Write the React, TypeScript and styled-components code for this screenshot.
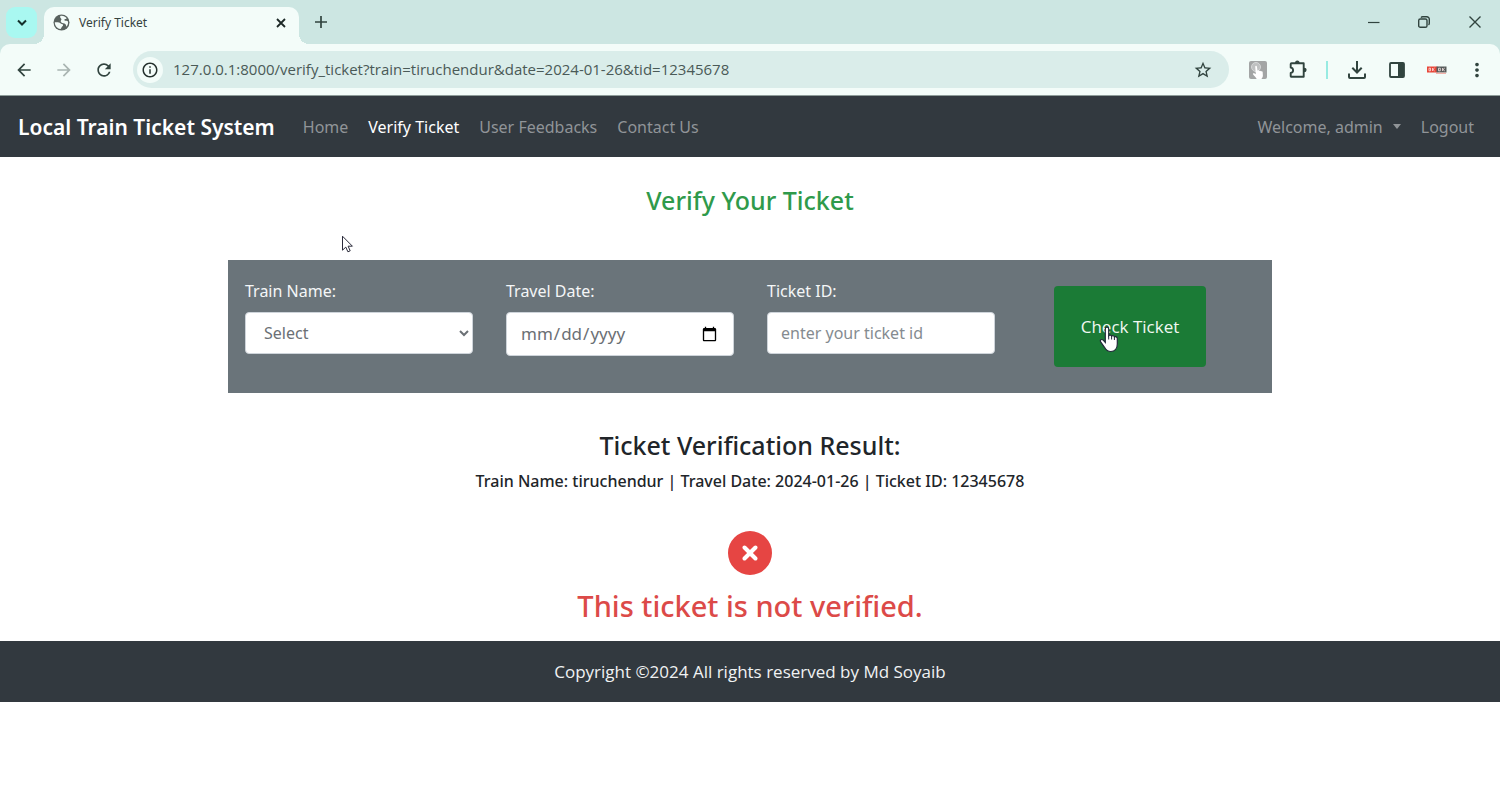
import React from 'react';
import styled, { createGlobalStyle } from 'styled-components';
import { FaCircleXmark } from 'react-icons/fa6';
import {
  MdArrowBack,
  MdArrowForward,
  MdInfoOutline,
  MdMoreVert,
  MdRefresh,
  MdStarBorder,
} from 'react-icons/md';

const ink = '#31443f';
const strip = '#cce6e2';
const surface = '#f3fcf9';
const dark = '#32393f';

const GlobalStyle = createGlobalStyle`
  *, *::before, *::after { box-sizing: border-box; }
  body {
    margin: 0;
    background: #fff;
    color: #212529;
    font: 400 16px/26px "Noto Sans", "Open Sans", sans-serif;
  }
  button, input, select { font: inherit; margin: 0; }
  button { border: 0; padding: 0; background: none; color: inherit; cursor: pointer; }
  h1, h2, h3, p { margin: 0; font-weight: 500; }
  svg { display: block; flex: none; }
`;

/* ---------- browser window ---------- */

const TabStrip = styled.div`
  display: flex;
  height: 44px;
  padding-left: 6px;
  background: ${strip};
  color: ${ink};
`;

const TabSearch = styled.button`
  display: grid;
  place-items: center;
  width: 31px;
  height: 31px;
  margin-top: 7px;
  border-radius: 9px;
  background: #a9f8f1;
  color: #14302b;
`;

const Tab = styled.div`
  position: relative;
  display: flex;
  align-items: center;
  width: 255px;
  height: 37px;
  margin: 7px 0 0 7px;
  padding: 0 10px 6px 9px;
  border-radius: 10px 10px 0 0;
  background: ${surface};
  font-size: 12px;
  line-height: 20px;

  &::before,
  &::after {
    content: '';
    position: absolute;
    bottom: 0;
    width: 10px;
    height: 10px;
  }
  &::before {
    right: 100%;
    background: radial-gradient(circle at 0 0, transparent 10px, ${surface} 10px);
  }
  &::after {
    left: 100%;
    background: radial-gradient(circle at 100% 0, transparent 10px, ${surface} 10px);
  }
`;

const TabTitle = styled.span`
  flex: 1;
  margin-left: 9px;
  color: #35433f;
`;

const IconButton = styled.button<{ $w?: number; $muted?: boolean }>`
  display: grid;
  place-items: center;
  flex: none;
  width: ${({ $w = 40 }) => $w}px;
  height: 30px;
  color: ${({ $muted }) => ($muted ? '#a9b5b2' : ink)};
`;

const NewTab = styled(IconButton)`
  margin: 7px 0 0 7px;
`;

const WindowControls = styled.div`
  display: flex;
  margin: 7px 0 0 auto;
`;

const ToolbarBack = styled.div`
  background: ${strip};
`;

const Toolbar = styled.div`
  display: flex;
  align-items: center;
  height: 52px;
  padding: 0 4px;
  border-bottom: 1px solid #8d9c99;
  border-radius: 10px 10px 0 0;
  background: ${surface};
`;

const Omnibox = styled.div`
  display: flex;
  align-items: center;
  flex: 1;
  min-width: 0;
  height: 37px;
  margin: 0 9px;
  padding: 0 6px 0 4px;
  border-radius: 19px;
  background: #daedea;
`;

const SiteInfo = styled.button`
  display: grid;
  place-items: center;
  flex: none;
  width: 26px;
  height: 26px;
  border-radius: 50%;
  background: ${surface};
  color: #24302d;
`;

const Address = styled.input`
  flex: 1;
  min-width: 0;
  margin-left: 10px;
  padding: 0 0 2px;
  border: 0;
  outline: 0;
  background: none;
  color: #4a5a57;
  font-family: 'Open Sans', 'Noto Sans', sans-serif;
  font-size: 15px;
  line-height: 20px;
`;

const Divider = styled.span`
  width: 2px;
  height: 18px;
  margin: 0 9px 0 8px;
  background: #97ebe2;
`;

/* ---------- site ---------- */

const Navbar = styled.nav`
  display: flex;
  align-items: center;
  height: 61px;
  padding: 0 26px 0 18px;
  background: ${dark};
`;

const Brand = styled.a`
  color: #fff;
  font-size: 21px;
  font-weight: 600;
  text-decoration: none;
`;

const NavList = styled.ul`
  display: flex;
  gap: 20px;
  margin: 0;
  padding: 0;
  list-style: none;

  &:nth-of-type(1) { margin-left: 28px; }
  &:nth-of-type(2) { margin-left: auto; }
`;

const NavLink = styled.a<{ $active?: boolean }>`
  display: flex;
  align-items: center;
  gap: 10px;
  color: ${({ $active }) => ($active ? '#fff' : '#909498')};
  text-decoration: none;
`;

const Caret = styled.span`
  border: 4px solid transparent;
  border-top: 5px solid currentColor;
  border-bottom: 0;
`;

const Title = styled.h1`
  margin: 25px 16px 42px;
  color: #2f9a4b;
  font-size: 25px;
  line-height: 36px;
  text-align: center;
`;

const Panel = styled.form`
  position: relative;
  display: grid;
  grid-template-columns: repeat(4, 1fr);
  max-width: 1044px;
  min-height: 133px;
  margin: 0 auto;
  padding-top: 18px;
  background: #6a747a;
`;

const Field = styled.div`
  display: flex;
  flex-direction: column;
  gap: 8px;
  padding: 0 16px 0 17px;
`;

const Label = styled.label`
  color: #f4f6f7;
`;

const control = `
  width: 100%;
  height: 42px;
  padding: 0 13px;
  border: 1px solid #ced4da;
  border-radius: 4px;
  background-color: #fff;
  color: #6b7075;
`;

const Select = styled.select`
  ${control}
  padding: 0 0 0 14px;
`;

const Input = styled.input`
  ${control}
  &::placeholder { color: #858b90; opacity: 1; }
`;

const DateInput = styled(Input)`
  height: 44px;
  font-size: 17px;
`;

const CheckButton = styled.button`
  position: relative;
  width: 152px;
  height: 81px;
  margin: 8px 0 0 43px;
  border-radius: 4px;
  background: #1b7b36;
  color: #f1f8f2;
  font-family: 'Open Sans', 'Noto Sans', sans-serif;
  font-size: 17px;
`;

const ArrowPointer = styled.svg`
  position: absolute;
  top: -25px;
  left: 113px;
`;

const HandPointer = styled.svg`
  position: absolute;
  top: 40px;
  left: 45px;
`;

const Result = styled.section`
  display: flex;
  flex-direction: column;
  align-items: center;
  padding: 34px 16px 17px;
  text-align: center;
`;

const ResultTitle = styled.h2`
  font-size: 25px;
  line-height: 36px;
`;

const ResultDetail = styled.p`
  margin: 5px 0 37px;
`;

const Verdict = styled.p`
  margin-top: 13px;
  color: #dc4a48;
  font-size: 29px;
  line-height: 36px;
`;

const Footer = styled.footer`
  padding: 18px 16px 17px;
  background: ${dark};
  color: #f0f2f3;
  font-family: 'Open Sans', 'Noto Sans', sans-serif;
  font-size: 17px;
  text-align: center;
`;

const links = ['Home', 'Verify Ticket', 'User Feedbacks', 'Contact Us'];

export default function App() {
  return (
    <>
      <GlobalStyle />
      <TabStrip>
        <TabSearch aria-label="Search tabs">
          <svg width="12" height="8" viewBox="0 0 12 8" fill="none" stroke="currentColor" strokeWidth="2">
            <path d="M2 1.500l4 4 4-4" />
          </svg>
        </TabSearch>
        <Tab>
          <svg width="17" height="17" viewBox="0 0 17 17" aria-hidden="true">
            <circle cx="8.500" cy="8.500" r="8" fill="#59625f" />
            <path
              d="M1.800 8.300c2.200-.3 4.600-.2 5.600 1 .7.900 2.500.2 2.700 1.700.1 1.200-1.300 1.300-1.500 2.300-.2.800-.5 1.400-1.300 1.800-3.200-.6-5.500-3.400-5.500-6.800zM7.300 2c2.600-.5 5 .5 6.400 2.300-.6.8-1.700.5-2.200 1.200-.5.800.4 1.300 1.400 1.300.8 0 1.700.2 2.100.8.300 1.900-.3 3.800-1.500 5.200-.4-1.500-.7-2.700-2.100-3.200-1.500-.5-3-.4-3.600-1.800-.4-1.100.9-1.700.6-2.700-.3-1-1.900-1.600-1.100-3.100z"
              fill={surface}
            />
          </svg>
          <TabTitle>Verify Ticket</TabTitle>
          <IconButton $w={16} aria-label="Close tab">
            <svg width="10" height="10" viewBox="0 0 10 10" stroke="#1c2826" strokeWidth="1.800">
              <path d="M1 1l8 8M9 1L1 9" />
            </svg>
          </IconButton>
        </Tab>
        <NewTab $w={30} aria-label="New tab">
          <svg width="12" height="12" viewBox="0 0 12 12" stroke="currentColor" strokeWidth="1.700">
            <path d="M6 0v12M0 6h12" />
          </svg>
        </NewTab>
        <WindowControls>
          <IconButton $w={51} aria-label="Minimize">
            <svg width="12" height="12" viewBox="0 0 12 12" stroke="currentColor" strokeWidth="1.2">
              <path d="M0 6.5h11.5" />
            </svg>
          </IconButton>
          <IconButton $w={50} aria-label="Restore">
            <svg width="12" height="12" viewBox="0 0 12 12" fill="none" stroke="currentColor" strokeWidth="1.400">
              <rect x="0.7" y="3" width="8.3" height="8.3" rx="1.6" />
              <path d="M3 1.6c.4-.6.9-.9 1.600-.9h4.200a2.500 2.500 0 0 1 2.500 2.500v4.100c0 .7-.3 1.200-.8 1.600" />
            </svg>
          </IconButton>
          <IconButton $w={51} aria-label="Close window">
            <svg width="12" height="12" viewBox="0 0 12 12" stroke="currentColor" strokeWidth="1.400">
              <path d="M.5.5l11 11M11.500.5l-11 11" />
            </svg>
          </IconButton>
        </WindowControls>
      </TabStrip>

      <ToolbarBack>
        <Toolbar>
          <IconButton aria-label="Back"><MdArrowBack size={20} /></IconButton>
          <IconButton $muted aria-label="Forward"><MdArrowForward size={20} /></IconButton>
          <IconButton aria-label="Reload"><MdRefresh size={20} /></IconButton>
          <Omnibox>
            <SiteInfo aria-label="Site information"><MdInfoOutline size={18} /></SiteInfo>
            <Address
              aria-label="Address"
              readOnly
              value="127.0.0.1:8000/verify_ticket?train=tiruchendur&date=2024-01-26&tid=12345678"
            />
            <IconButton aria-label="Bookmark"><MdStarBorder size={20} /></IconButton>
          </Omnibox>
          <IconButton aria-label="Click extension">
            <svg width="18" height="18" viewBox="0 0 18 18">
              <rect width="18" height="18" rx="2" fill="#a3a5a5" />
              <circle cx="7" cy="6" r="4.500" fill="#bfc1c1" stroke="#d5d7d7" />
              <path
                fill="#fff"
                d="M6.200 5.500c0-1 1.600-1 1.700 0l.6 4.200c.5-.6 1.600-.5 1.800.2.600-.5 1.500-.2 1.700.4.900-.4 1.700.1 1.700 1l.2 3.200c0 1.500-.8 2.500-1.500 3.500H7.700c-.8-1.600-2.600-3.200-3.700-4.700-.5-.8.500-1.500 1.300-1l1.500.9z"
              />
            </svg>
          </IconButton>
          <IconButton aria-label="Extensions">
            <svg width="20" height="20" viewBox="0 0 20 20">
              <path
                d="M3.500 3.300h12.200v13.400H3.500a.8.8 0 0 1-.8-.8v-3c3.200-.3 3.200-5 0-5.300V4.100a.8.8 0 0 1 .8-.8z"
                fill="none"
                stroke="currentColor"
                strokeWidth="1.900"
                strokeLinejoin="round"
              />
              <path d="M7 3a2.300 2.600 0 0 1 4.600 0zM16 7.700a2.600 2.300 0 0 1 0 4.600z" fill="currentColor" />
            </svg>
          </IconButton>
          <Divider />
          <IconButton aria-label="Downloads">
            <svg width="20" height="20" viewBox="0 0 20 20" fill="none" stroke="currentColor" strokeWidth="2">
              <path d="M10 1v11M5.300 7.800l4.700 4.700 4.700-4.700M2 13.500V17a1 1 0 0 0 1 1h14a1 1 0 0 0 1-1v-3.500" />
            </svg>
          </IconButton>
          <IconButton aria-label="Side panel">
            <svg width="16" height="16" viewBox="0 0 16 16">
              <rect x="1" y="1" width="14" height="14" rx="1" fill="none" stroke="currentColor" strokeWidth="1.800" />
              <path d="M9 1h6v14H9z" fill="currentColor" />
            </svg>
          </IconButton>
          <IconButton aria-label="Profile">
            <svg width="20" height="10" viewBox="0 0 20 10">
              <rect y="1.500" width="10.500" height="6" fill="#e8473a" />
              <rect x="9.500" y="1.500" width="10" height="6" fill="#565b5b" />
              <path d="M9 8.300h10" stroke="#f2aaa2" strokeWidth="1.200" />
              <path
                d="M3.500 3.200h-1.500v2.600h1.500zM5.500 6V3M7.600 3L6 4.500 7.600 6M11.500 3.200h1.800v2.600h-1.800zM15.500 6V3M17.800 3L16 4.500 17.800 6"
                fill="none"
                stroke="#fbe9e7"
                strokeWidth=".8"
              />
            </svg>
          </IconButton>
          <IconButton $w={39} aria-label="Menu"><MdMoreVert size={22} /></IconButton>
        </Toolbar>
      </ToolbarBack>

      <Navbar>
        <Brand href="#">Local Train Ticket System</Brand>
        <NavList>
          {links.map((text) => (
            <li key={text}>
              <NavLink href="#" $active={text === 'Verify Ticket'}>{text}</NavLink>
            </li>
          ))}
        </NavList>
        <NavList>
          <li><NavLink href="#">Welcome, admin<Caret /></NavLink></li>
          <li><NavLink href="#">Logout</NavLink></li>
        </NavList>
      </Navbar>

      <main>
        <Title>Verify Your Ticket</Title>
        <Panel onSubmit={(e) => e.preventDefault()}>
          <Field>
            <Label htmlFor="train">Train Name:</Label>
            <Select id="train" defaultValue="">
              <option value="">Select</option>
              <option value="tiruchendur">tiruchendur</option>
            </Select>
          </Field>
          <Field>
            <Label htmlFor="date">Travel Date:</Label>
            <DateInput id="date" type="date" />
          </Field>
          <Field>
            <Label htmlFor="tid">Ticket ID:</Label>
            <Input id="tid" type="text" placeholder="enter your ticket id" />
          </Field>
          <CheckButton type="submit">
            Check Ticket
            <HandPointer width="20" height="28" viewBox="0 0 20 28" aria-hidden="true">
              <path
                d="M6.300 3c0-2.400 3.400-2.400 3.400 0v6.800c.7-1.200 2.600-.9 2.900.4.900-.9 2.500-.5 2.800.7 1.300-.7 2.900.1 2.900 1.700v5.400c0 4.300-2.500 7.500-6.500 7.500-3.300 0-4.900-1.600-6.300-4.200L1.500 15.700c-.9-1.700 1.300-3 2.700-1.500l2.100 2.300z"
                fill="#fff"
                stroke="#222a3a"
                strokeWidth="1.200"
              />
              <path d="M9.700 9.500v4M12.600 10v3.500M15.400 11v3" stroke="#222a3a" strokeWidth="1" />
            </HandPointer>
          </CheckButton>
          <ArrowPointer width="13" height="18" viewBox="0 0 13 18" aria-hidden="true">
            <path
              d="M1.500 1.200v14l3.300-3.100 2.100 4.700 2.300-1-2.100-4.600h4.300z"
              fill="#fff"
              stroke="#2a2a3a"
              strokeWidth="1"
            />
          </ArrowPointer>
        </Panel>

        <Result>
          <ResultTitle>Ticket Verification Result:</ResultTitle>
          <ResultDetail>Train Name: tiruchendur | Travel Date: 2024-01-26 | Ticket ID: 12345678</ResultDetail>
          <FaCircleXmark size={44} color="#e64543" />
          <Verdict>This ticket is not verified.</Verdict>
        </Result>
      </main>

      <Footer>Copyright ©2024 All rights reserved by Md Soyaib</Footer>
    </>
  );
}
